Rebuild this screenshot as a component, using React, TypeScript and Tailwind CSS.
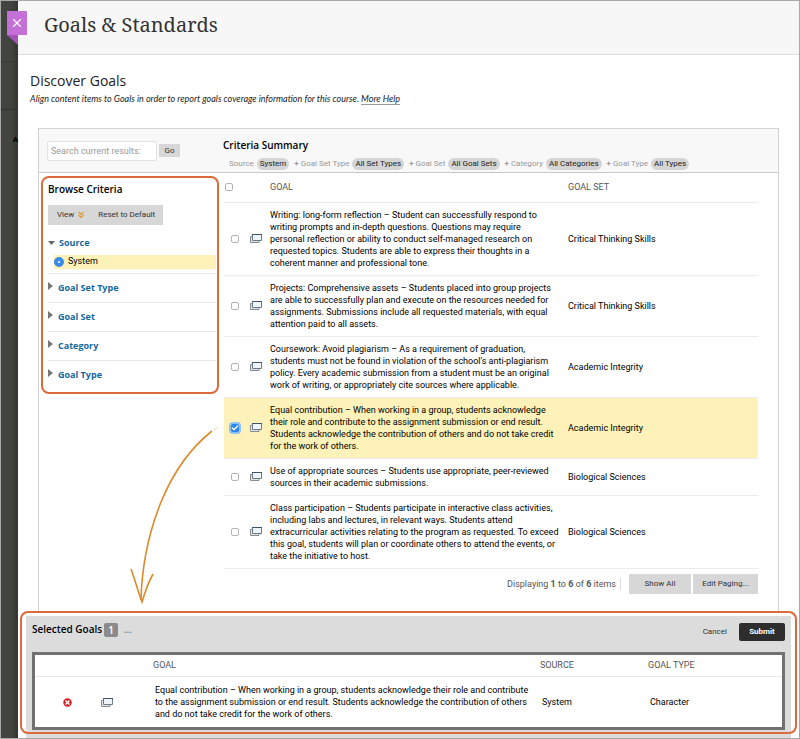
import { useState } from 'react';
import { Check, X } from 'lucide-react';

interface Goal {
  id: string;
  text: string;
  goalSet: string;
}

const GOALS: Goal[] = [
  {
    id: 'writing',
    text: 'Writing: long-form reflection – Student can successfully respond to writing prompts and in-depth questions. Questions may require\npersonal reflection or ability to conduct self-managed research on requested topics. Students are able to express their thoughts in a coherent manner and professional tone.',
    goalSet: 'Critical Thinking Skills',
  },
  {
    id: 'projects',
    text: 'Projects: Comprehensive assets – Students placed into group projects are able to successfully plan and execute on the resources needed for assignments. Submissions include all requested materials, with equal attention paid to all assets.',
    goalSet: 'Critical Thinking Skills',
  },
  {
    id: 'coursework',
    text: "Coursework: Avoid plagiarism – As a requirement of graduation, students must not be found in violation of the school's anti-plagiarism policy. Every academic submission from a student must be an original work of writing, or appropriately cite sources where applicable.",
    goalSet: 'Academic Integrity',
  },
  {
    id: 'equal',
    text: 'Equal contribution – When working in a group, students acknowledge their role and contribute to the assignment submission or end result. Students acknowledge the contribution of others and do not take credit for the work of others.',
    goalSet: 'Academic Integrity',
  },
  {
    id: 'sources',
    text: 'Use of appropriate sources – Students use appropriate, peer-reviewed sources in their academic submissions.',
    goalSet: 'Biological Sciences',
  },
  {
    id: 'participation',
    text: 'Class participation – Students participate in interactive class activities, including labs and lectures, in relevant ways. Students attend extracurricular activities relating to the program as requested. To exceed this goal, students will plan or coordinate others to attend the events, or take the initiative to host.',
    goalSet: 'Biological Sciences',
  },
];

const SUMMARY = [
  { label: 'Source', value: 'System' },
  { label: 'Goal Set Type', value: 'All Set Types' },
  { label: 'Goal Set', value: 'All Goal Sets' },
  { label: 'Category', value: 'All Categories' },
  { label: 'Goal Type', value: 'All Types' },
];

const COLLAPSED = ['Goal Set Type', 'Goal Set', 'Category', 'Goal Type'];

function PagesIcon() {
  return (
    <svg viewBox="0 0 12 11" className="block h-[11px] w-3" aria-hidden="true">
      <path d="M.5 3.500h8.500v6H.5z" fill="#dfe3e6" stroke="#8a8c8e" />
      <path d="M2.500 1.500h9v6h-9z" fill="#eef5fa" stroke="#6b7b89" />
      <path d="M2 1.500h10" stroke="#3f5468" />
    </svg>
  );
}

function Tick({ label, checked, onChange }: { label: string; checked: boolean; onChange: () => void }) {
  return (
    <span className="relative block h-2 w-2">
      <input
        type="checkbox"
        aria-label={label}
        checked={checked}
        onChange={onChange}
        className="block h-2 w-2 appearance-none rounded-xs border border-[#b5b5b5] bg-white checked:border-[#2f86e6] checked:bg-[#2f86e6] checked:ring-2 checked:ring-[#8fc1ee]"
      />
      {checked && <Check className="pointer-events-none absolute inset-0 h-2 w-2 text-white" strokeWidth={4} />}
    </span>
  );
}

function Sidebar() {
  return (
    <aside className="mt-[3px] ml-[2px] h-[218px] w-[178px] shrink-0 rounded-lg border-2 border-[#dc6b3c] pt-[3px] pr-[1px] pl-[5px]">
      <h3 className="font-['Open_Sans',sans-serif] text-[10px] leading-4 font-semibold text-black">Browse Criteria</h3>
      <div className="mt-2 flex w-[115px] bg-[#d8d7d7] text-[8px] leading-5 text-[#333]">
        <button className="flex items-center gap-1 pl-[9px]">
          View
          <svg viewBox="0 0 6 8" className="h-2 w-[6px]" fill="none" stroke="#dd9a35" strokeWidth="1.200" aria-hidden="true">
            <path d="M.5 1l2.500 2.500L5.500 1M.5 4l2.500 2.500L5.500 4" />
          </svg>
        </button>
        <button className="ml-[14px]">Reset to Default</button>
      </div>

      <div className="pt-3 pb-1">
        <button className="flex items-center gap-1 font-['Open_Sans',sans-serif] text-[9px] leading-3 font-bold text-[#13679f]">
          <svg viewBox="0 0 7 4" className="h-1 w-[7px]" aria-hidden="true">
            <path d="M0 0h7L3.500 4z" fill="#666" />
          </svg>
          Source
        </button>
        <label className="mt-[6px] ml-[6px] flex h-[14px] items-center gap-1 bg-[#fdf3b8] text-[9px] text-black">
          <input
            type="radio"
            name="source"
            defaultChecked
            className="h-[10px] w-[10px] appearance-none rounded-full border-4 border-[#3a8ce8] bg-white"
          />
          System
        </label>
      </div>

      {COLLAPSED.map((name) => (
        <div key={name} className="flex h-[29px] items-center border-t border-[#e9e9e9]">
          <button className="flex items-center gap-[5px] font-['Open_Sans',sans-serif] text-[9px] leading-3 font-bold text-[#13679f]">
            <svg viewBox="0 0 5 8" className="mb-1 h-2 w-[5px]" aria-hidden="true">
              <path d="M0 0l5 4-5 4z" fill="#777" />
            </svg>
            {name}
          </button>
        </div>
      ))}
    </aside>
  );
}

function GoalsTable({ selected, onToggle }: { selected: string[]; onToggle: (id: string) => void }) {
  return (
    <table className="w-full table-fixed text-left text-[9px] leading-3 text-black">
      <colgroup>
        <col className="w-6" />
        <col className="w-[22px]" />
        <col className="w-[298px]" />
        <col />
      </colgroup>
      <thead>
        <tr className="h-[29px] text-[#555]">
          <th className="pl-[1px]">
            <Tick label="Select all" checked={false} onChange={() => undefined} />
          </th>
          <th />
          <th className="font-normal">GOAL</th>
          <th className="font-normal">GOAL SET</th>
        </tr>
      </thead>
      <tbody>
        {GOALS.map((goal) => (
          <tr key={goal.id} className={`border-t border-[#ececec] ${selected.includes(goal.id) ? 'bg-[#fdf2b9]' : ''}`}>
            <td className="pl-[7px]">
              <Tick label={goal.goalSet} checked={selected.includes(goal.id)} onChange={() => onToggle(goal.id)} />
            </td>
            <td className="pl-[2px]">
              <PagesIcon />
            </td>
            <td className="py-[6px] pr-2 whitespace-pre-line">{goal.text}</td>
            <td>{goal.goalSet}</td>
          </tr>
        ))}
      </tbody>
      <tfoot>
        <tr className="border-t border-[#ececec]">
          <td colSpan={4} className="pt-[5px]">
            <div className="flex items-center justify-end text-[#333]">
              <span className="mr-2 border-r border-[#ddd] pr-1 text-[#555]">
                Displaying <b>1</b> to <b>6</b> of <b>6</b> items
              </span>
              <button className="mr-[2px] w-[62px] bg-[#d8d7d7] text-[8px] leading-5">Show All</button>
              <button className="w-[65px] bg-[#d8d7d7] text-[8px] leading-5">Edit Paging...</button>
            </div>
          </td>
        </tr>
      </tfoot>
    </table>
  );
}

function SelectedGoals({ goals, onRemove }: { goals: Goal[]; onRemove: (id: string) => void }) {
  return (
    <section className="relative mr-[2px] ml-[2px] px-[6px] pt-[5px]">
      <div className="bg-[#dcdcdc] px-[6px] pb-2">
        <div className="flex h-9 items-center pb-1">
          <h3 className="mr-auto flex items-center pb-1 font-['Open_Sans',sans-serif] text-[10px] font-semibold text-black">
            Selected Goals
            <span className="mr-[6px] ml-[2px] rounded-xs bg-[#8b8b8b] px-1 leading-[14px] text-white">{goals.length}</span>
            <span className="font-normal text-[#666]">...</span>
          </h3>
          <button className="mr-3 text-[8px] text-[#333]">Cancel</button>
          <button className="h-[18px] w-[46px] rounded-xs bg-[#2d2d2d] text-[8px] font-bold text-white">Submit</button>
        </div>
        <div className="border-[3px] border-[#717171] bg-white">
          <table className="w-full table-fixed text-left text-[9px] leading-3 text-black">
            <colgroup>
              <col className="w-[66px]" />
              <col className="w-[52px]" />
              <col />
              <col className="w-[108px]" />
              <col className="w-[134px]" />
            </colgroup>
            <thead>
              <tr className="h-[22px] text-[#555]">
                <th />
                <th />
                <th className="font-normal">GOAL</th>
                <th className="font-normal">SOURCE</th>
                <th className="font-normal">GOAL TYPE</th>
              </tr>
            </thead>
            <tbody>
              {goals.map((goal) => (
                <tr key={goal.id} className="border-t border-[#e9e9e9]">
                  <td className="pl-7">
                    <button aria-label="Remove" onClick={() => onRemove(goal.id)} className="block">
                      <svg viewBox="0 0 10 10" className="block h-[9px] w-[9px]">
                        <circle cx="5" cy="5" r="4.700" fill="#d3222a" />
                        <path d="M2.800 2.800l4.400 4.400M7.200 2.800L2.800 7.200" stroke="#fff" strokeWidth="1.600" />
                      </svg>
                    </button>
                  </td>
                  <td>
                    <PagesIcon />
                  </td>
                  <td className="py-[7px] pr-1 pl-[2px]">{goal.text}</td>
                  <td className="pl-[2px]">System</td>
                  <td className="pl-[2px]">Character</td>
                </tr>
              ))}
            </tbody>
          </table>
        </div>
      </div>
      {/* Highlight around the selection tray */}
      <div className="pointer-events-none absolute inset-x-0 top-0 bottom-1 rounded-lg border-2 border-[#dc6b3c]" />
    </section>
  );
}

export default function App() {
  const [selected, setSelected] = useState(['equal']);

  const toggle = (id: string) =>
    setSelected((prev) => (prev.includes(id) ? prev.filter((item) => item !== id) : [...prev, id]));

  return (
    <div className="relative flex min-h-screen overflow-hidden border border-[#a8a8a8] bg-white font-['Roboto','Open_Sans',sans-serif]">
      {/* Dimmed page behind the panel */}
      <div className="w-[17px] shrink-0 bg-linear-to-r from-[#42443f] from-60% to-[#343633] text-right">
        <div className="h-[61px] border-b border-[#373936]" />
        <div className="h-12 border-b border-[#30322f]" />
        <div className="mt-[22px] text-[8px] leading-4 font-bold text-black">A</div>
      </div>

      <main className="flex min-w-0 flex-1 flex-col">
        <header className="flex h-[54px] items-center border-b border-[#dcdcdc] bg-[#f7f7f7] px-[26px] pb-[6px]">
          <h1 className="font-['Noto_Serif','Droid_Serif','DejaVu_Serif_Condensed',serif] text-[20px] leading-7 text-[#333]">
            Goals &amp; Standards
          </h1>
        </header>

        <div className="px-3 pt-4">
          <h2 className="font-['Open_Sans',sans-serif] text-[14px] leading-5 text-[#222]">Discover Goals</h2>
          <p className="mt-[1px] font-['Lato',sans-serif] text-[9px] leading-[14px] text-[#222] italic">
            Align content items to Goals in order to report goals coverage information for this course.{' '}
            <a href="#help" className="border-b border-[#999]">More Help</a>
          </p>
        </div>

        <section className="mt-[22px] mr-5 ml-5 border border-b-0 border-[#d3d3d3]">
          <div className="flex h-11 items-center border-b border-[#c9c9c9] bg-[#f8f8f8] pl-2">
            <form className="flex w-44 items-center" onSubmit={(e) => e.preventDefault()}>
              <input
                aria-label="Search current results"
                placeholder="Search current results:"
                className="h-5 w-[110px] rounded-xs border border-[#e2e2e2] bg-white px-[3px] text-[9px] placeholder:text-[#999]"
              />
              <button className="ml-[2px] h-[13px] w-[21px] bg-[#d8d7d7] text-[8px] leading-3 text-[#333]">Go</button>
            </form>
            <div className="flex h-full flex-col justify-between pt-2 pb-[2px]">
              <h3 className="font-['Open_Sans',sans-serif] text-[10px] leading-4 font-semibold text-black">Criteria Summary</h3>
              <ul className="flex gap-[5px] pl-[6px] text-[8px] leading-3 whitespace-nowrap text-[#999]">
                {SUMMARY.map((item, i) => (
                  <li key={item.label} className="flex gap-[3px]">
                    <span>
                      {i > 0 && <b>+ </b>}
                      {item.label}
                    </span>
                    <span className="rounded-full bg-[#d5d5d5] px-[3px] text-[#222]">{item.value}</span>
                  </li>
                ))}
              </ul>
            </div>
          </div>

          <div className="flex pb-[17px]">
            <Sidebar />
            <div className="mr-5 ml-[5px] min-w-0 flex-1">
              <GoalsTable selected={selected} onToggle={toggle} />
            </div>
          </div>
        </section>

        <SelectedGoals goals={GOALS.filter((goal) => selected.includes(goal.id))} onRemove={toggle} />
      </main>

      {/* Close ribbon */}
      <div className="absolute top-[10px] left-[6px]">
        <button aria-label="Close" className="flex h-6 w-5 items-center justify-center bg-[#c56fd8] text-white">
          <X className="h-[14px] w-[14px]" strokeWidth={2} />
        </button>
        <svg viewBox="0 0 11 10" className="block h-[10px] w-[11px]" aria-hidden="true">
          <path d="M0 0h11v10z" fill="#a453b8" />
        </svg>
      </div>

      {/* Hand-drawn arrow from the ticked row to the tray */}
      <svg viewBox="0 0 90 180" className="pointer-events-none absolute top-[425px] left-[129px] h-[180px] w-[90px]" fill="none" stroke="#dc8a2c" aria-hidden="true">
        <path d="M87 2l-3 2" strokeWidth="1" opacity=".5" />
        <path d="M82 5C58 24 43 47 31 76C21 101 12 133 11 174" strokeWidth="1.600" />
        <path d="M1 143C5 154 8 165 12 176C15 166 18 157 23 148" strokeWidth="1.600" />
      </svg>
    </div>
  );
}
